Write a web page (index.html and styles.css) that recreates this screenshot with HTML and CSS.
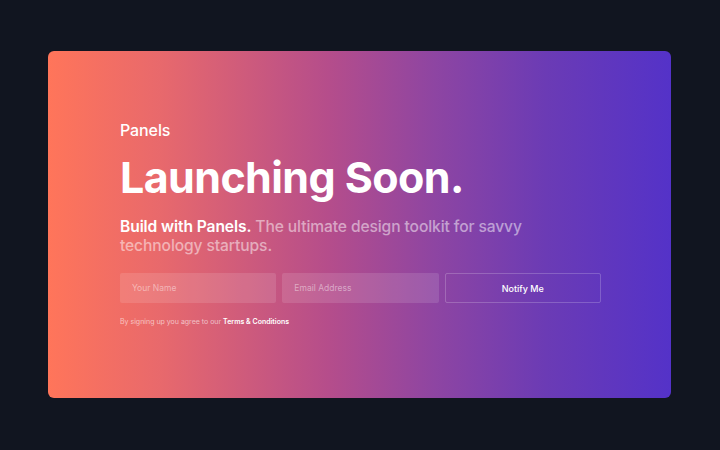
FILE: index.html
```html
<!DOCTYPE html>
<html>
<head>
<meta charset="utf-8">
<link rel="stylesheet" href="styles.css">
</head>
<body>
<div class="page">
  <section class="card">
    <div class="brand">Panels</div>
    <h1 class="title">Launching Soon.</h1>
    <p class="lead"><strong>Build with Panels.</strong> The ultimate design toolkit for savvy technology startups.</p>
    <form class="form">
      <input class="field" type="text" placeholder="Your Name">
      <input class="field" type="text" placeholder="Email Address">
      <button class="btn" type="button">Notify Me</button>
    </form>
    <p class="terms">By signing up you agree to our <strong>Terms &amp; Conditions</strong></p>
  </section>
</div>
</body>
</html>
```
FILE: styles.css
```css
html, body {
  margin: 0;
  padding: 0;
  background: #111520;
  font-family: Inter, "Noto Sans", sans-serif;
}
.page {
  width: 720px;
  height: 450px;
  padding: 51px 49px 52px 48px;
  box-sizing: border-box;
}
.card {
  height: 100%;
  border-radius: 6px;
  background: linear-gradient(90deg, #ff755a 0%, #e8696c 18%, #b54d8b 45%, #8e45a2 62%, #6b3bb5 80%, #5432c8 100%);
  padding: 70px 72px 0 72px;
  box-sizing: border-box;
  color: #fff;
}
.brand {
  font-size: 16px;
  font-weight: 500;
  line-height: 18px;
  letter-spacing: -0.1px;
}
.title {
  margin: 12px 0 0;
  font-size: 43px;
  font-weight: 700;
  line-height: 52px;
  letter-spacing: -0.6px;
}
.lead {
  margin: 14px 0 0;
  width: 430px;
  font-size: 15.6px;
  line-height: 19px;
  font-weight: 500;
  color: rgba(255,255,255,0.5);
  letter-spacing: -0.1px;
}
.lead strong {
  color: #fff;
  font-weight: 600;
}
.form {
  display: grid;
  grid-template-columns: repeat(3, minmax(0, 1fr));
  gap: 6px;
  margin-top: 18px;
  width: 481px;
}
.field, .btn {
  width: 100%;
  height: 30px;
  box-sizing: border-box;
  border-radius: 2px;
  font-family: Inter, "Noto Sans", sans-serif;
  font-size: 8.5px;
  margin: 0;
}
.field {
  border: 0;
  background: rgba(255,255,255,0.12);
  padding: 0 12px;
  color: #fff;
}
.field::placeholder {
  color: rgba(255,255,255,0.45);
}
.btn {
  background: transparent;
  border: 1px solid rgba(255,255,255,0.2);
  color: #fff;
  font-weight: 500;
  font-size: 9px;
}
.terms {
  margin: 14px 0 0;
  font-size: 7px;
  color: rgba(255,255,255,0.6);
}
.terms strong {
  color: #fff;
  font-weight: 600;
}
```
